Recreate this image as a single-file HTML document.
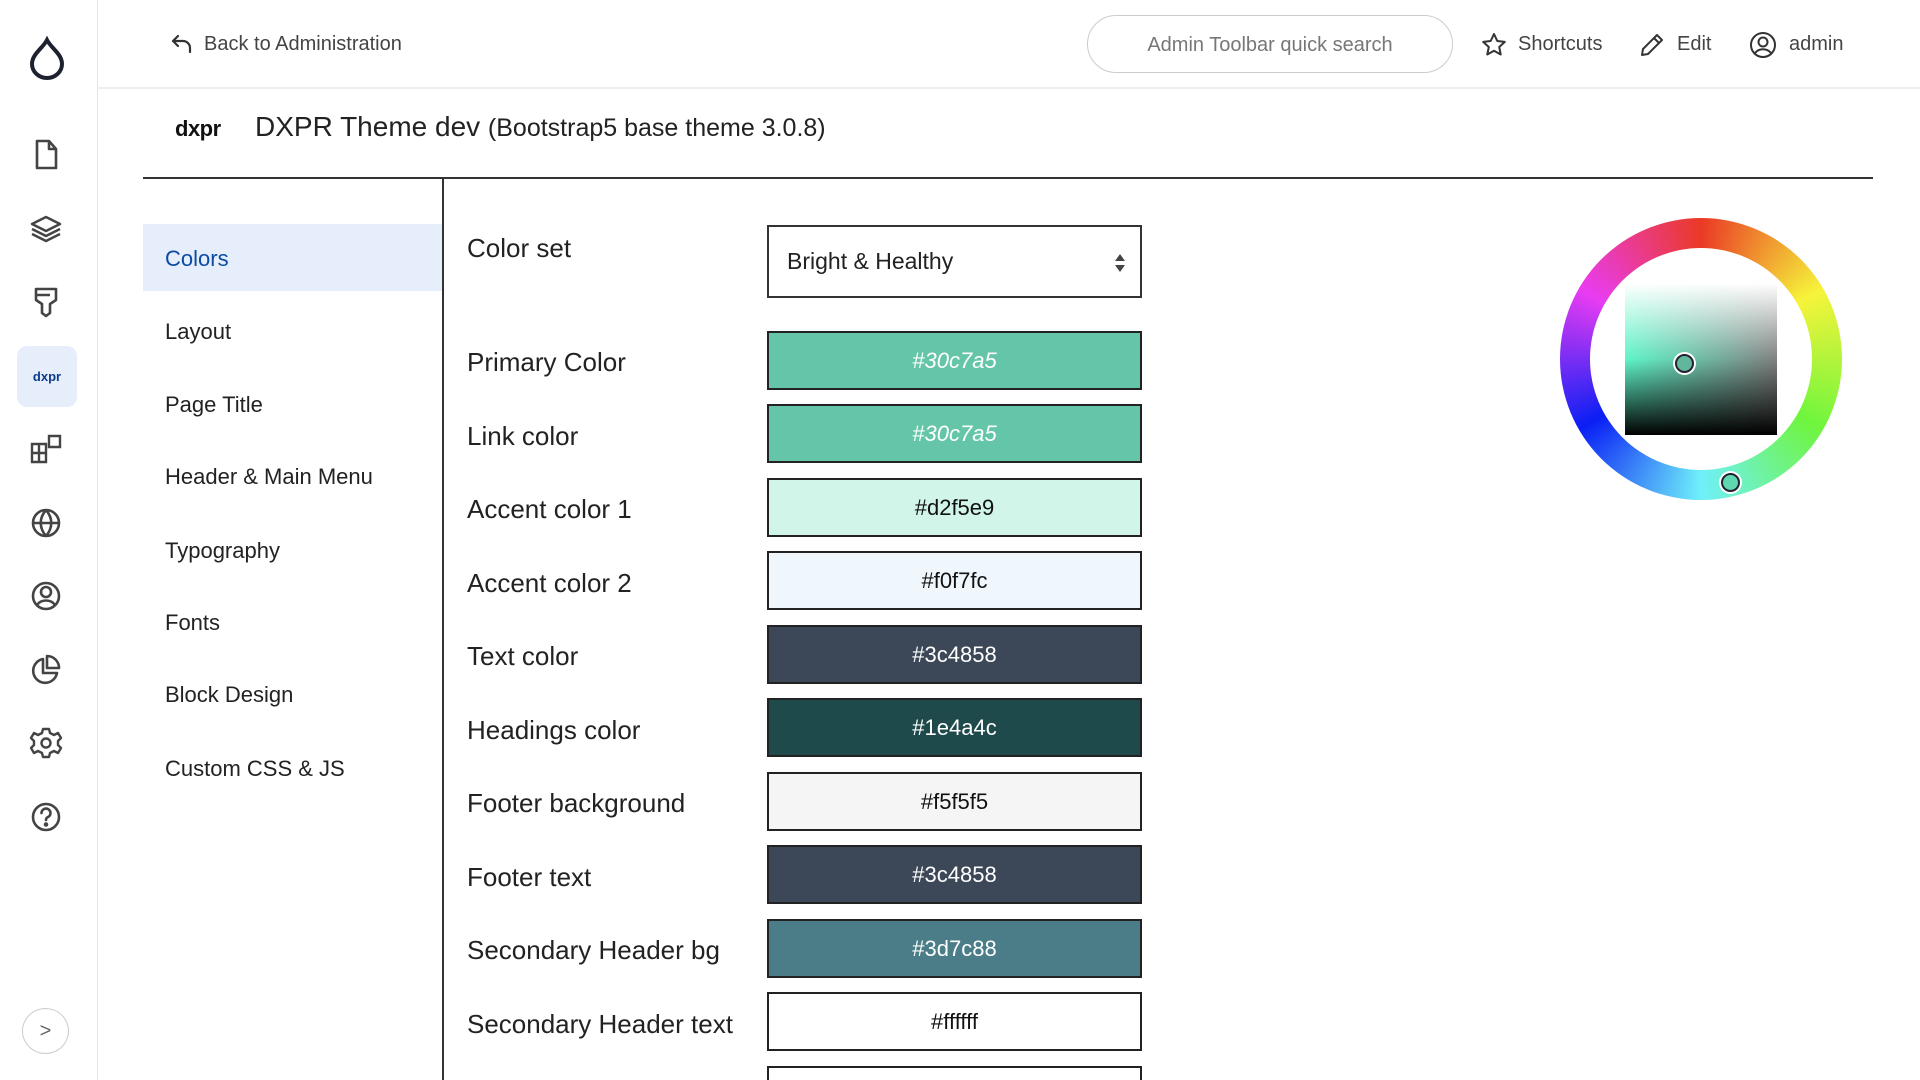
<!DOCTYPE html>
<html style="overflow:hidden;height:1080px"><head><meta charset="utf-8"><style>
*{box-sizing:border-box;margin:0;padding:0}
body{width:1920px;height:1080px;overflow:hidden;background:#fff;font-family:"Liberation Sans",sans-serif;color:#222;position:relative}
.side{position:absolute;left:0;top:0;width:98px;height:1080px;border-right:1px solid #e6e6e6;background:#fff}
.ic{position:absolute;left:29px;width:34px;height:34px}
.top{position:absolute;left:98px;top:0;right:0;height:89px;border-bottom:2px solid #eee}
.t{position:absolute;font-size:20px;color:#444;top:33px}
.search{position:absolute;left:989px;top:15px;width:366px;height:58px;border:1px solid #ccc;border-radius:29px;font-size:20px;color:#777;text-align:center;line-height:58px}
.hline{position:absolute;left:143px;top:177px;width:1730px;height:2px;background:#333}
.vline{position:absolute;left:442px;top:178px;width:2px;height:902px;background:#333}
.tab{position:absolute;left:143px;width:299px;height:67px;padding-left:22px;line-height:69px;font-size:22px;color:#222}
.tab.a{background:#e6eefb;color:#0b4ba3}
.lbl{position:absolute;left:467px;font-size:26px;color:#222}
.sw{position:absolute;left:767px;width:375px;height:59px;border:2px solid #222;text-align:center;line-height:55px;font-size:22px}
</style></head><body>
<div class="side">
<svg class="ic" style="top:36px;left:27px;width:40px;height:44px" viewBox="0 0 40 44"><path d="M20 4 C24 12 35 18 35 28 A15 14 0 0 1 5 28 C5 18 16 12 20 4Z" fill="none" stroke="#1e2230" stroke-width="4"/></svg>
<svg class="ic" style="top:138px" viewBox="0 0 34 34" fill="none" stroke="#444" stroke-width="2.6" stroke-linejoin="round"><path d="M8 3h12l7 8v19H8z M20 3v8h7"/></svg>
<svg class="ic" style="top:212px" viewBox="0 0 34 34" fill="none" stroke="#444" stroke-width="2.4" stroke-linejoin="round"><path d="M17 5 3 12l14 7 14-7z M3 17l14 7 14-7 M3 22l14 7 14-7"/></svg>
<svg class="ic" style="top:285px" viewBox="0 0 34 34" fill="none" stroke="#444" stroke-width="2.6" stroke-linejoin="round"><path d="M7 4h20v11l-6 4v9l-4 3-4-3v-9l-6-4z M7 10h14"/></svg>
<div style="position:absolute;left:17px;top:346px;width:60px;height:61px;background:#e6eefb;border-radius:10px;text-align:center;line-height:61px;font-size:13px;font-weight:bold;color:#0b3c8a">dxpr</div>
<svg class="ic" style="top:432px" viewBox="0 0 34 34" fill="none" stroke="#444" stroke-width="2.4"><path d="M3 12h14v18H3z M3 21h14 M10 12v18 M20 4h11v11H20z"/></svg>
<svg class="ic" style="top:506px" viewBox="0 0 34 34" fill="none" stroke="#444" stroke-width="2.6"><circle cx="17" cy="17" r="13"/><path d="M4 17h26 M17 4c-7 8-7 18 0 26 M17 4c7 8 7 18 0 26"/></svg>
<svg class="ic" style="top:579px" viewBox="0 0 34 34" fill="none" stroke="#444" stroke-width="2.6"><circle cx="17" cy="17" r="13"/><circle cx="17" cy="13" r="5"/><path d="M8 26c4-6 14-6 18 0"/></svg>
<svg class="ic" style="top:653px" viewBox="0 0 34 34" fill="none" stroke="#444" stroke-width="2.6" stroke-linejoin="round"><path d="M14 6A12 12 0 1 0 28 20H14z M18 3a12 12 0 0 1 12 12H18z"/></svg>
<svg class="ic" style="top:726px" viewBox="0 0 34 34" fill="none" stroke="#444" stroke-width="2.4" stroke-linejoin="round"><path d="M14 3h6l1 4 4 2 4-2 3 5-3 3v4l3 3-3 5-4-2-4 2-1 4h-6l-1-4-4-2-4 2-3-5 3-3v-4l-3-3 3-5 4 2 4-2z"/><circle cx="17" cy="17" r="4.5"/></svg>
<svg class="ic" style="top:800px" viewBox="0 0 34 34" fill="none" stroke="#444" stroke-width="2.6"><circle cx="17" cy="17" r="13"/><path d="M12.5 13a4.5 4.5 0 1 1 6 4.3c-1.2.5-1.5 1.2-1.5 2.7" stroke-linecap="round"/><circle cx="17" cy="24.5" r="1" fill="#444"/></svg>
<div style="position:absolute;left:22px;top:1008px;width:47px;height:46px;border:1px solid #ccc;border-radius:50%;text-align:center;line-height:44px;color:#666;font-size:20px">&gt;</div>
</div>
<div class="top">
<svg style="position:absolute;left:73px;top:34px" width="22" height="20" viewBox="0 0 22 20" fill="none" stroke="#333" stroke-width="2.2" stroke-linecap="round" stroke-linejoin="round"><path d="M7 2 2 7l5 5 M2 7h10a7 7 0 0 1 7 7v4"/></svg>
<div class="t" style="left:106px;color:#444">Back to Administration</div>
<div class="search">Admin Toolbar quick search</div>
<svg style="position:absolute;left:1383px;top:32px" width="26" height="26" viewBox="0 0 26 26" fill="none" stroke="#333" stroke-width="2" stroke-linejoin="round"><path d="M13 2l3.3 7 7.5.9-5.6 5.1 1.5 7.5L13 18.8 6.3 22.5l1.5-7.5L2.2 9.9l7.5-.9z"/></svg>
<div class="t" style="left:1420px">Shortcuts</div>
<svg style="position:absolute;left:1541px;top:32px" width="26" height="26" viewBox="0 0 26 26" fill="none" stroke="#333" stroke-width="2" stroke-linejoin="round"><path d="M18 3l5 5L9 22l-6 1 1-6z M15 6l5 5"/></svg>
<div class="t" style="left:1579px">Edit</div>
<svg style="position:absolute;left:1651px;top:31px" width="28" height="28" viewBox="0 0 28 28" fill="none" stroke="#333" stroke-width="2"><circle cx="14" cy="14" r="12"/><circle cx="14" cy="11" r="4.5"/><path d="M6 22c4-5 12-5 16 0"/></svg>
<div class="t" style="left:1691px">admin</div>
</div>
<div style="position:absolute;left:175px;top:116px;font-size:22px;font-weight:bold;color:#111;letter-spacing:-0.5px">dxpr</div>
<div style="position:absolute;left:255px;top:111px;font-size:28px;color:#222">DXPR Theme dev <span style="font-size:25px">(Bootstrap5 base theme 3.0.8)</span></div>
<div class="hline"></div><div class="vline"></div>
<div class="tab a" style="top:224px">Colors</div>
<div class="tab" style="top:297px">Layout</div>
<div class="tab" style="top:370px">Page Title</div>
<div class="tab" style="top:442px">Header &amp; Main Menu</div>
<div class="tab" style="top:516px">Typography</div>
<div class="tab" style="top:588px">Fonts</div>
<div class="tab" style="top:660px">Block Design</div>
<div class="tab" style="top:734px">Custom CSS &amp; JS</div>
<div class="lbl" style="top:233px">Color set</div>
<div style="position:absolute;left:767px;top:225px;width:375px;height:73px;border:2px solid #333;padding-left:18px;line-height:69px;font-size:23px;color:#222">Bright &amp; Healthy
<svg style="position:absolute;right:14px;top:27px" width="12" height="18" viewBox="0 0 12 18" fill="#444"><path d="M6 0l5 7H1z M6 18l5-7H1z"/></svg></div>
<div class="lbl" style="top:347px">Primary Color</div>
<div class="sw" style="top:331px;background:#64c5a8;color:#fff;font-style:italic">#30c7a5</div>
<div class="lbl" style="top:421px">Link color</div>
<div class="sw" style="top:404px;background:#64c5a8;color:#fff;font-style:italic">#30c7a5</div>
<div class="lbl" style="top:494px">Accent color 1</div>
<div class="sw" style="top:478px;background:#d2f5e9;color:#111">#d2f5e9</div>
<div class="lbl" style="top:568px">Accent color 2</div>
<div class="sw" style="top:551px;background:#f0f7fc;color:#111">#f0f7fc</div>
<div class="lbl" style="top:641px">Text color</div>
<div class="sw" style="top:625px;background:#3c4858;color:#fff">#3c4858</div>
<div class="lbl" style="top:715px">Headings color</div>
<div class="sw" style="top:698px;background:#1e4a4c;color:#fff">#1e4a4c</div>
<div class="lbl" style="top:788px">Footer background</div>
<div class="sw" style="top:772px;background:#f5f5f5;color:#111">#f5f5f5</div>
<div class="lbl" style="top:862px">Footer text</div>
<div class="sw" style="top:845px;background:#3c4858;color:#fff">#3c4858</div>
<div class="lbl" style="top:935px">Secondary Header bg</div>
<div class="sw" style="top:919px;background:#4a7d87;color:#fff">#3d7c88</div>
<div class="lbl" style="top:1009px">Secondary Header text</div>
<div class="sw" style="top:992px;background:#fff;color:#111">#ffffff</div>
<div class="sw" style="top:1066px;height:14px;border-bottom:none;background:#fff"></div>
<div style="position:absolute;left:1560px;top:218px;width:282px;height:282px;border-radius:50%;background:conic-gradient(#ea3a25,#f6f43a 60deg,#6ff53d 120deg,#6ff0fa 180deg,#0a1ff5 240deg,#e93cf2 300deg,#ea3a25 360deg)"></div>
<div style="position:absolute;left:1590px;top:248px;width:222px;height:222px;border-radius:50%;background:#fff"></div>
<div style="position:absolute;left:1625px;top:283px;width:152px;height:152px;background:linear-gradient(to bottom,#fff 0%,rgba(255,255,255,0) 50%,rgba(0,0,0,0) 50%,#000 100%),linear-gradient(to right,#5ff5c9,#808080)"></div>
<div style="position:absolute;left:1675px;top:354px;width:19px;height:19px;border-radius:50%;background:#62b69c;border:2px solid #223;box-shadow:0 0 0 2px #fff"></div>
<div style="position:absolute;left:1721px;top:473px;width:19px;height:19px;border-radius:50%;background:#5fd8b0;border:2px solid #223;box-shadow:0 0 0 2px #fff"></div>
</body></html>
